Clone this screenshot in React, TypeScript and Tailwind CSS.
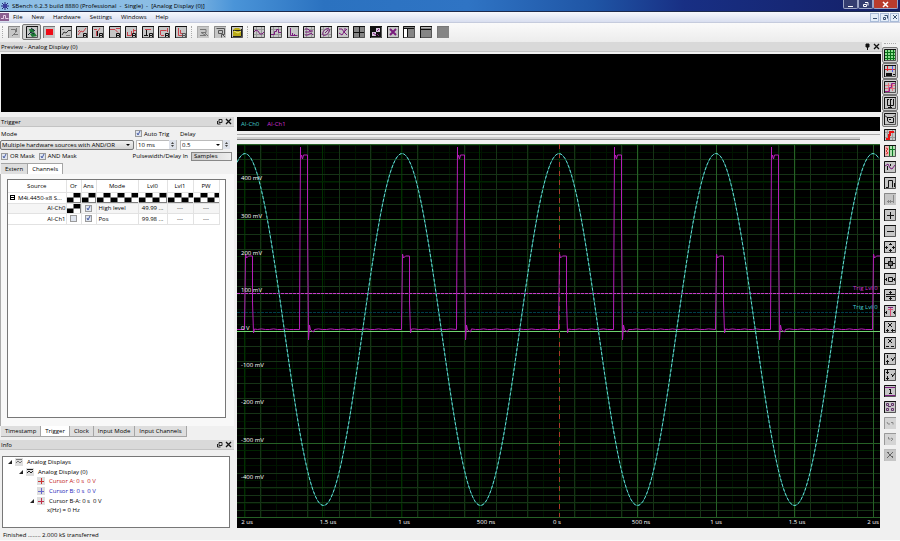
import React from "react";

type Stroke = { d: string; c?: string; w?: number; fill?: boolean };
type IconDef = { label: string; bg?: string; pressed?: boolean; edge?: string; s: Stroke[] };

const K = "#111111";
const G = "#777777";
const R = "#c8434b";
const P = "#7a1d7d";
const RX = "M7.5 11V7.5h3v2H8M9.500 9.500l2 2";

const fileTools: IconDef[] = [
  { label: "Start", edge: "#888", s: [{ d: "M3 3.500h4.500v3L4 10M8.500 2v4M6 8.500h4", c: G }] },
  { label: "Run loop", pressed: true, s: [{ d: "M3 3h5v3H4zM4 8l4-2 3 4-5 1z", c: "#1f7a35", fill: true }, { d: "M2 9l3-3 3 2M5 2l4 3", c: "#123", w: 1 }] },
  { label: "Stop", edge: "#777", s: [{ d: "M3 3h7v6H3z", c: "#ee0b16", fill: true }] },
  { label: "Single", s: [{ d: "M2 9l2-3 2 1 3-3M9 4.500h2", c: "#333" }, { d: "M2 3.500h2M6 9.500h4", c: "#777" }] },
  { label: "Record rising", s: [{ d: "M2 9l3-4 2 1 3-4M2 6l2-2", c: R }, { d: RX, c: K }] },
  { label: "Record pulse", s: [{ d: "M4.500 10V5M2 3.500h3M8 2L6 5", c: R }, { d: RX, c: K }, { d: "M5.500 5v5", c: K }] },
  { label: "Record falling", s: [{ d: "M1 3.500h5l3 3M7 2.500h4", c: R }, { d: RX, c: K }] },
  { label: "Record window", s: [{ d: "M2 9.500h4.500V5M8.500 3v4M2.500 6v3M9 4.500h2", c: R }, { d: RX, c: K }] },
  { label: "Record time", s: [{ d: "M3 3.500h6", c: R }, { d: "M4.500 4v6M2 9.500h4", c: K }, { d: RX, c: K }] },
  { label: "Record gate", s: [{ d: "M2.500 9V4.500h6M9.500 2v4M3 9.500h3", c: R }, { d: RX, c: K }] },
  { label: "Record list", s: [{ d: "M3.500 2v7.500h5M5.500 4v3.500h4", c: R }, { d: RX, c: "#555" }] },
];
const storeTools: IconDef[] = [
  { label: "Export", edge: "#aaa", s: [{ d: "M3 3.500h6v3H4l5 3H3M8 7l3 3", c: G }] },
  { label: "Import", edge: "#888", s: [{ d: "M2.500 2.500h8v6H7.500v3M4.500 4.500h4v3h-4zM9 9l2 2", c: "#555" }] },
  { label: "Open", s: [{ d: "M2 4l2-2h4l2 2v6H2z", c: "#b9aa18", fill: true }, { d: "M2 4.500h8M2 10.500h8.500V3", c: "#222" }, { d: "M3 5l4 2 3-2", c: "#f2ea7c" }] },
];
const gridLines: Stroke = { d: "M1 3.5h10M1 8.5h10M3.5 1v10M8.5 1v10", c: "#9b9b9b" };
const viewTools: IconDef[] = [
  { label: "Analog display", s: [gridLines, { d: "M1 6l2-2 2 1 2 3h2l2-2", c: P }] },
  { label: "Digital display", s: [gridLines, { d: "M1 8.500h3.500V5.500h2V3.500h2v3h3", c: P }] },
  { label: "FFT display", s: [{ d: "M3.500 2v7.500h7M5.500 7v2M7.500 8v1", c: P }] },
  { label: "Histogram", s: [gridLines, { d: "M2 3h3l2 2h3M2 6h4l2-1M2 9h3l3-2 2 2", c: P }] },
  { label: "XY display", s: [gridLines, { d: "M3 9C1 6 7 1 9 3S6 11 3 9zM5 7l3-3", c: P }] },
  { label: "Eye diagram", s: [{ d: "M2 3h3l2 3 3-3M2 7l3 2 2-3 3 3M8 2v3", c: P }] },
  { label: "Tile", bg: "#858585", s: [{ d: "M6.500 1v10M1 6.500h10", c: K }] },
  { label: "Cascade", bg: "#111", s: [{ d: "M6 2h4v4H6zM2 6h4v4H2z", c: "#d8c8df", fill: true }, { d: "M7 5l2-2M3 7l3 2M7 8l2 2", c: P }] },
  { label: "Close display", s: [{ d: "M3 3l6 6M9 3L3 9", c: P, w: 2 }] },
  { label: "Left dock", bg: "#858585", s: [{ d: "M1 3h3v8H1z", c: "#fff", fill: true }, { d: "M1 2.5h10M4.5 3v8", c: K }] },
  { label: "Top dock", bg: "#858585", s: [{ d: "M1 3.5h10", c: K }, { d: "M1 1.500h10", c: "#bbb" }] },
  { label: "Clear layout", bg: "#858585", edge: "#777", s: [] },
];
const sideTools: IconDef[] = [
  { label: "Grid", pressed: true, bg: "#8fdf92", s: [{ d: "M3.5 1v10M6.500 1v10M9.5 1v10M1 3.5h10M1 6.500h10M1 9.5h10", c: "#067016" }] },
  { label: "Cursors", pressed: true, s: [{ d: "M1 4.5h10M3.5 1v5", c: "#e0202c" }, { d: "M8.5 1v6", c: "#5560ee" }, { d: "M2 8h6v3H2zM9 9h2v1H9z", c: K, fill: true }] },
  { label: "Interpolation", pressed: true, s: [{ d: "M1 4.500h10M1 7.5h10M4.500 2v8M8.500 2v8", c: "#e2707c" }, { d: "M1 10.500h4.500V6.500h2V2.500h4", c: "#9a1a8a" }] },
  { label: "Trident", pressed: true, s: [{ d: "M3.500 2v6.500h6V2M6.500 2v9M4 2.500h1M7 2.500h1M4 10.500h4", c: K }] },
  { label: "Label", pressed: true, s: [{ d: "M1 2.500l2 2h6l2-2M3.500 4v4l2 1.500h4V5M5 6.500h2", c: K }] },
  { label: "Trigger edge", s: [gridLines, { d: "M2 10h3V6h1V3h4", c: "#e91212", w: 2 }] },
  { label: "Trigger mask", s: [{ d: "M1 1h4v10H1z", c: "#eeb3b3", fill: true }, { d: "M5 1h6v10H5z", c: "#b3dfb3", fill: true }, { d: "M5.5 1v10M8.5 1v10M5 4.5h6", c: "#0a7722" }, { d: "M2 3l2 1-2 2 2 2-2 1", c: "#e03232" }] },
  { label: "Signal", s: [{ d: "M1 5l3-2 2 4 2 1 3-4", c: P }, { d: "M3.500 5v4M6.500 3v2", c: K }] },
  { label: "Gate", s: [{ d: "M2 10.500h2.500V3.500h4v7M10.500 6v4", c: K }] },
  { label: "Measure", edge: "#888", s: [{ d: "M3 8.500h7M4.500 7v3M9.500 2v8M6.500 7v3", c: "#888" }] },
  { label: "Zoom in", s: [{ d: "M6.500 3v7M3 6.500h7", c: K }] },
  { label: "Zoom out", s: [{ d: "M3 6.500h7", c: K }] },
  { label: "Expand", s: [{ d: "M6.500 2v2M6.500 8v3M1 6.500h3M8 6.500h3M2.500 5v3M9.500 5v3M5 3.500h3M5 9.500h3", c: K }] },
  { label: "Fit all", s: [{ d: "M4 4h5v5H4z", c: "#666", fill: true }, { d: "M6.500 1v3M6.500 9v2M1 6.500h3M9 6.500h2M4.500 4.500h4v4h-4z", c: K }] },
  { label: "Fit width", s: [{ d: "M4.500 4.500h4v4h-4zM1 6.500h2M9 6.500h2M2.500 5v3M10.500 5v3", c: K }] },
  { label: "Fit height", s: [{ d: "M2 5.500h9M2 7.500h9M6.500 2v4M6.500 8v3M5 3.500h3M5 9.500h3", c: K }] },
  { label: "Center trigger", s: [{ d: "M6.500 3v8M4 4.500h5", c: "#d84b77" }, { d: "M4 2.500h5", c: P }, { d: "M2.500 6v3M10.500 6v3M1 7.500h2M9 7.500h2", c: K }] },
  { label: "X zoom in", s: [{ d: "M4 2l4 4M8 2L4 6M2 9.500h3M7 9.500h4M3.500 8v3M8.500 8v3", c: K }] },
  { label: "X zoom out", s: [{ d: "M4 2l4 4M8 2L4 6M2 9.500h3M7 9.500h3", c: K }] },
  { label: "Y zoom in", s: [{ d: "M3.500 2v3M3.500 7v4M2 8.500h3M7 5l2 2 2-3M8 8l1-1", c: K }] },
  { label: "Y zoom out", s: [{ d: "M3.500 1v4M3.500 7v4M2 3.500h3M2 9.500h3M7 5l2 2 2-3M8 8l1-1", c: K }] },
  { label: "Amplitude", s: [{ d: "M1 2.500h10M1 10.500h10", c: P }, { d: "M6.500 4v5M5 4.500h2M5 8.500h3", c: K }] },
  { label: "Matrix", s: [{ d: "M2.500 2.500h2v2h-2zM7.500 2.500h2v2h-2zM2.500 7.500h2v2h-2zM7.500 7.500h2v2h-2zM4 5.500h3", c: "#62356a" }] },
  { label: "Undo", edge: "#999", bg: "#d4d4d4", s: [{ d: "M3 5l1 2h2M7 5.500h2v2", c: "#888" }] },
  { label: "Redo", edge: "#999", bg: "#d4d4d4", s: [{ d: "M4.500 4v2h2M7 5l2 1-2 2", c: "#888" }] },
  { label: "Remove", edge: "#bbb", s: [{ d: "M3 3l6 6M9 3L3 9M4.500 3v2M8.500 7v2", c: "#666" }] },
];

function ToolIcon({ def }: { def: IconDef }) {
  const edge = def.edge ?? "#111";
  return (
    <svg viewBox="0 0 12 12" className="size-3 shrink-0" aria-hidden="true">
      <rect width="12" height="12" fill={def.bg ?? "#c6c6c6"} />
      {def.s.map((p, i) => (
        <path key={i} d={p.d} fill={p.fill ? p.c : "none"} stroke={p.fill ? "none" : p.c} strokeWidth={p.w ?? 1} />
      ))}
      <path d="M.5 12V.5H12" fill="none" stroke={edge} />
      {def.edge ? null : <path d="M11.5 1v10.500H1" fill="none" stroke="#555" />}
    </svg>
  );
}

function ToolButton({ def, vertical }: { def: IconDef; vertical?: boolean }) {
  const size = vertical ? "h-4 w-full" : "h-4 flex-1";
  const look = def.pressed ? "border border-[#777] rounded-xs bg-[#d2d2d2]" : "";
  return (
    <button type="button" title={def.label} aria-label={def.label} className={`flex items-center justify-center ${size} ${look}`}>
      <ToolIcon def={def} />
    </button>
  );
}

const Handle = () => <div className="h-3 w-[2px] mx-[2px] shrink-0 border-l border-dotted border-[#aaa]" />;

function DockHeader({ title, pin }: { title: string; pin?: boolean }) {
  return (
    <header className="flex items-center justify-between h-[10px] shrink-0 bg-[#d9d9d9] border-b border-[#c3c3c3] pr-[2px]">
      <h2 className="pl-px">{title}</h2>
      <div className="flex gap-[2px]">
        <button type="button" aria-label={pin ? "Pin" : "Float"}>
          <svg viewBox="0 0 7 7" className="size-[7px]">
            {pin ? <path d="M2 1h3v3H2zM3.500 4v3" fill="#111" stroke="#111" /> : <path d="M3 1.500h3v3H3zM1.500 3v3h3" fill="none" stroke="#222" />}
          </svg>
        </button>
        <button type="button" aria-label="Close">
          <svg viewBox="0 0 7 7" className="size-[7px]"><path d="M1 1l5 5M6 1L1 6" stroke="#111" strokeWidth="1.300" /></svg>
        </button>
      </div>
    </header>
  );
}

function Tick({ label, checked = true }: { label?: string; checked?: boolean }) {
  return (
    <label className="flex items-center gap-[2px] whitespace-nowrap">
      <span className="grid size-[7px] shrink-0">
        <input type="checkbox" defaultChecked={checked} aria-label={label ?? "Enable"} className="peer col-start-1 row-start-1 size-[7px] appearance-none border border-[#9a9a9a] bg-[#dfe5ef]" />
        <svg viewBox="0 0 7 7" className="pointer-events-none invisible col-start-1 row-start-1 size-[7px] peer-checked:visible"><path d="M2 3l1 2 2-4" fill="none" stroke="#4a5ea6" /></svg>
      </span>
      {label}
    </label>
  );
}

function Tabs({ items, active, below }: { items: string[]; active: string; below?: boolean }) {
  return (
    <div role="tablist" className="flex h-[11px] shrink-0 pl-px">
      {items.map((t) => (
        <button
          key={t}
          type="button"
          role="tab"
          aria-selected={t === active}
          className={`px-1 border-r border-[#a5a5a5] ${below ? "border-b" : "border-t"} ${t === active ? "bg-white" : "bg-[#dedede]"}`}
        >
          {t}
        </button>
      ))}
    </div>
  );
}

const CHECKER = "bg-[conic-gradient(#000_25%,#fff_0_50%,#000_0_75%,#fff_0)] bg-[length:14px_10px]";

function TriggerTable() {
  const cell = "border-r border-b border-[#e2e2e2] p-0";
  return (
    <table className="w-[211px] table-fixed border-collapse text-center">
      <colgroup>
        <col className="w-[58px]" /><col className="w-[15px]" /><col className="w-[15px]" /><col className="w-[42px]" />
        <col className="w-[29px]" /><col className="w-[26px]" /><col className="w-[26px]" />
      </colgroup>
      <thead>
        <tr className="h-3">
          {["Source", "Or", "Ans", "Mode", "Lvl0", "Lvl1", "PW"].map((h) => (
            <th key={h} scope="col" className={`font-normal ${cell}`}>{h}</th>
          ))}
        </tr>
      </thead>
      <tbody>
        <tr className="h-[11px]">
          <td className={cell}>
            <div className="flex items-center gap-[3px] pl-[2px] whitespace-nowrap">
              <button type="button" aria-label="Collapse" className="size-[5px] shrink-0 border border-black bg-[linear-gradient(#000,#000)] bg-[length:3px_1px] bg-center bg-no-repeat" />
              M4i.4450-x8 S...
            </div>
          </td>
          {[0, 1, 2, 3, 4, 5].map((i) => <td key={i} className={`${cell} ${CHECKER}`} />)}
        </tr>
        <tr className="h-[10px] bg-[#f5f5f5]">
          <td className={`${cell} text-right`}>AI-Ch0</td>
          <td className={`${cell} ${CHECKER}`} />
          <td className={cell}><div className="flex justify-center"><Tick /></div></td>
          <td className={`${cell} text-left pl-[2px]`}>High level</td>
          <td className={cell}>49.99 ...</td><td className={cell}>---</td><td className={cell}>---</td>
        </tr>
        <tr className="h-[11px]">
          <td className={`${cell} text-right`}>AI-Ch1</td>
          <td className={cell}><div className="flex justify-center"><Tick checked={false} /></div></td>
          <td className={cell}><div className="flex justify-center"><Tick /></div></td>
          <td className={`${cell} text-left pl-[2px]`}>Pos</td>
          <td className={cell}>99.98 ...</td><td className={cell}>---</td><td className={cell}>---</td>
        </tr>
      </tbody>
    </table>
  );
}

function Spin() {
  return (
    <svg viewBox="0 0 7 9" className="h-[9px] w-[7px] shrink-0" aria-hidden="true">
      <rect width="7" height="9" fill="#dde1ea" /><path d="M2 4l1.500-2L5 4zM2 5l1.500 2L5 5z" fill="#444" />
    </svg>
  );
}

function TriggerDock() {
  const field = "h-[10px] border border-[#bbb] bg-white";
  return (
    <section className="flex flex-1 flex-col min-h-0">
      <DockHeader title="Trigger" />
      <div className="flex h-3 items-center pl-px pt-px">
        <label htmlFor="mode" className="w-[134px]">Mode</label>
        <div className="w-[45px]"><Tick label="Auto Trig" /></div>
        <label htmlFor="delay">Delay</label>
      </div>
      <div className="flex h-[11px] items-center">
        <div className="grid w-[134px]">
          <select id="mode" className="col-start-1 row-start-1 h-[10px] w-full appearance-none rounded-xs border border-[#777] bg-linear-to-b from-[#f0f0f0] to-[#d2d2d2] pl-px leading-[8px]">
            <option>Multiple hardware sources with AND/OR</option>
          </select>
          <span className="pointer-events-none col-start-1 row-start-1 mr-1 self-center justify-self-end border-x-2 border-t-2 border-x-transparent border-t-black" />
        </div>
        <div className={`ml-[2px] flex w-[41px] items-center ${field}`}>
          <input aria-label="Auto trigger time" defaultValue="10 ms" className="min-w-0 flex-1 pl-px leading-[8px]" /><Spin />
        </div>
        <div className={`ml-[3px] flex w-[43px] items-center pr-[2px] ${field}`}>
          <input id="delay" defaultValue="0.5" className="min-w-0 flex-1 pl-px leading-[8px]" />
          <span className="border-x-2 border-t-2 border-x-transparent border-t-black" />
        </div>
        <Spin />
      </div>
      <div className="flex h-3 items-center gap-1 pl-px">
        <Tick label="OR Mask" />
        <Tick label="AND Mask" />
        <label htmlFor="unit" className="ml-auto -mr-[2px]">Pulsewidth/Delay In</label>
        <select id="unit" className="mr-[2px] ml-px h-[9px] w-[41px] appearance-none border border-[#888] bg-linear-to-r from-[#ccc] to-[#eee] pl-[2px] leading-[7px]">
          <option>Samples</option>
        </select>
      </div>
      <div className="h-px shrink-0" />
      <Tabs items={["Extern", "Channels"]} active="Channels" />
      <div className="min-h-0 flex-1 border-l border-[#aaa] bg-[#f8f8f8] pt-[5px] pb-2 pl-[6px] pr-2">
        <div className="h-full border border-[#777] bg-white"><TriggerTable /></div>
      </div>
      <Tabs items={["Timestamp", "Trigger", "Clock", "Input Mode", "Input Channels"]} active="Trigger" below />
    </section>
  );
}

const tree = [
  { pad: "pl-1", open: true, icon: "#777", text: "Analog Displays", tone: "" },
  { pad: "pl-[15px]", open: true, icon: "#222", text: "Analog Display (0)", tone: "" },
  { pad: "pl-[26px]", open: false, icon: "#c33", text: "Cursor A: 0 s  0 V", tone: "text-[#c22020]" },
  { pad: "pl-[26px]", open: false, icon: "#66c", text: "Cursor B: 0 s  0 V", tone: "text-[#2020b8]" },
  { pad: "pl-[26px]", open: true, icon: "#c0304a", text: "Cursor B-A: 0 s  0 V", tone: "" },
  { pad: "pl-[36px]", open: false, icon: "", text: "x(Hz) = 0 Hz", tone: "" },
];

function InfoDock() {
  return (
    <section className="flex h-[88px] shrink-0 flex-col">
      <DockHeader title="Info" />
      <ul className="mt-[6px] ml-[2px] mr-1 flex h-[72px] flex-col border border-[#777] bg-white pb-3">
        {tree.map((n, i) => (
          <li key={n.text} className={`flex min-h-0 flex-1 items-center whitespace-pre ${n.pad} ${n.tone}`}>
            <svg viewBox="0 0 6 6" className="mr-[2px] size-[6px]">{n.open && <path d="M1 5h4V1z" fill="#222" />}</svg>
            {n.icon && (
              <svg viewBox="0 0 8 8" className="mr-1 size-2">
                <rect width="8" height="8" fill="#dedede" />
                <path d={i < 2 ? "M1 5l2-2 2 2 2-2M1 1.500h6" : "M1 4.500h6M4.500 1v6"} fill="none" stroke={n.icon} />
              </svg>
            )}
            {n.text}
          </li>
        ))}
      </ul>
    </section>
  );
}

const PLOT_W = 643;
const PLOT_H = 384;
const ZERO_X = 322;
const ZERO_Y = 187;
const US = 157;

function sinePath() {
  let d = "";
  for (let x = 0; x <= PLOT_W; x += 2) {
    const y = 185.5 - 176 * Math.cos(((x - ZERO_X) / US) * 2 * Math.PI);
    d += `${x ? "L" : "M"}${x} ${y.toFixed(1)}`;
  }
  return d;
}

function pulsePath() {
  let d = "M0 185.5";
  for (let k = -2; k <= 2; k++) {
    const a = ZERO_X + k * US + 0.5;
    d += `L${a - 1} 185.5L${a} 110l1 4l2-2h4v46l1 31l1-4`;
    if (k === 2) break;
    for (let x = a + 12; x < a + 52; x += 4) d += `L${x} ${185.5 - (Math.floor(x) % 3 === 0 ? 0.6 : 0)}`;
    const b = a + 55;
    d += `L${b - 1} 185.5L${b} 3v12l1-4l1 4l1-4h4v64l1 121l1-15l1 5l3 2`;
    for (let x = b + 14; x < b + 98; x += 4) d += `L${x} ${185.5 - (Math.floor(x) % 3 === 0 ? 0.6 : 0)}`;
  }
  return d;
}

const SINE = sinePath();
const PULSE = pulsePath();
const MID_Y = [15, 30, 45, 60, 90, 105, 127, 142, 157, 172, 202, 217, 239, 254, 269, 284, 314, 329, 343, 351, 358, 366];
const MID_X = [23, 70, 102, 133, 180, 227, 259, 290, 337, 384, 416, 463, 510, 541, 573, 620];
const BRIGHT_X = [400, 479, 557, 636];
const yLabels: [string, number][] = [["400 mV", 34], ["300 mV", 72], ["200 mV", 109], ["100 mV", 146], ["0 V", 184], ["-100 mV", 221], ["-200 mV", 258], ["-300 mV", 296], ["-400 mV", 333]];
const xLabels: [string, number][] = [["2 us", 10], ["1.5 us", 91], ["1 us", 167], ["500 ns", 249], ["0 s", 320], ["500 ns", 404], ["1 us", 479], ["1.5 us", 560], ["2 us", 636]];

function Plot() {
  const fine = Array.from({ length: 51 }, (_, i) => ZERO_Y + (i - 25) * 7.46).filter((y) => y > 0 && y < 373);
  const cols = Array.from({ length: 41 }, (_, i) => ZERO_X + (i - 20) * 15.7);
  const px = (v: number) => `${(v / PLOT_W) * 100}%`;
  const py = (v: number) => `${(v / PLOT_H) * 100}%`;
  return (
    <svg className="min-h-0 w-full flex-1 bg-black" role="img" aria-label="Analog waveform display">
      <svg viewBox={`0 0 ${PLOT_W} ${PLOT_H}`} width="100%" height="100%" preserveAspectRatio="none" fill="none">
        {fine.map((y) => <path key={y} d={`M0 ${Math.round(y) + 0.5}H643`} stroke="#001400" />)}
        {cols.map((x) => <path key={x} d={`M${Math.round(x) + 0.5} 0V373`} stroke="#001400" />)}
        {[8, 86, 165, 243].map((x) => <path key={x} d={`M${x - 0.5} 0V373`} stroke="#003000" />)}
        {[37, 112, 224, 306].map((y) => <path key={y} d={`M0 ${y + 0.5}H643`} stroke="#002400" />)}
        {MID_Y.map((y) => <path key={y} d={`M0 ${y + 0.5}H643`} stroke="#163316" />)}
        {MID_X.map((x) => <path key={x} d={`M${x + 0.5} 0V373`} stroke="#163316" />)}
        {BRIGHT_X.map((x) => <path key={x} d={`M${x + 0.5} 0V373`} stroke="#266026" />)}
        {[0, 75, 299, 373].map((y) => <path key={y} d={`M0 ${y + 0.5}H643`} stroke="#266026" />)}
        <path d="M0 187.500H643" stroke="#6fd46f" />
        <path d="M0 168.500H643" stroke="#003c48" strokeDasharray="3 1" />
        <path d="M0 149.500H643" stroke="#4a124c" />
        <path d="M0 149.500H643" stroke="#c53fca" strokeDasharray="3 1" />
        <path d="M322.500 0V373" stroke="#003a00" />
        <path d="M322.500 0V373" stroke="#a83a2a" strokeDasharray="5 4" />
        <path d={PULSE} stroke="#b51db8" />
        <path d={SINE} stroke="#1c746c" />
        <path d={SINE} stroke="#62d8cd" strokeDasharray="3 2" />
      </svg>
      <g fill="#fff" className="text-[6px]">
        {yLabels.map(([t, y]) => <text key={t} x={px(4)} y={py(y + 2)}>{t}</text>)}
        {xLabels.map(([t, x], i) => <text key={i} x={px(x)} y={py(380)} textAnchor="middle">{t}</text>)}
      </g>
      <g className="text-[6px]">
        <text x={px(616)} y={py(146)} fill="#d02fd4">Trig Lvl 0</text>
        <text x={px(616)} y={py(165)} fill="#45cfd0">Trig Lvl 0</text>
      </g>
    </svg>
  );
}

function WindowControls() {
  const b = "flex h-[9px] items-center justify-center rounded-b-xs border border-t-0 border-[#9aa3c4]";
  return (
    <div className="flex self-start pr-[2px] text-white">
      <button type="button" aria-label="Minimize" className={`w-[15px] bg-[#343d70] ${b}`}><span className="mt-1 h-px w-[5px] bg-white" /></button>
      <button type="button" aria-label="Restore" className={`w-[15px] bg-[#343d70] ${b}`}>
        <svg viewBox="0 0 7 7" className="size-[7px]"><path d="M3 1.500h3v3M1.500 3.500h3v2h-3z" fill="none" stroke="#fff" /></svg>
      </button>
      <button type="button" aria-label="Close" className={`w-[25px] bg-[#b93c2c] ${b}`}>
        <svg viewBox="0 0 7 7" className="size-[7px]"><path d="M1 1l5 5M6 1L1 6" stroke="#fff" strokeWidth="1.500" /></svg>
      </button>
    </div>
  );
}

export default function App() {
  return (
    <div className="flex h-screen flex-col overflow-hidden bg-[#f0f0f0] font-['Open_Sans','Noto_Sans',sans-serif] text-[6px] leading-[8px] text-black">
      <header className="flex h-3 shrink-0 items-center justify-between border-b border-[#1c2a4c] bg-[linear-gradient(90deg,#8fc0e6_0%,#8abce4_20%,#4a94d8_26%,#2b72c0_36%,#2f74c4_52%,#1f55a5_66%,#182f84_76%,#141f66_100%)]">
        <div className="flex items-center gap-[3px] pl-px whitespace-pre">
          <svg viewBox="0 0 8 8" className="size-2"><path d="M4 0v8M0 4h8M1 1l6 6M7 1L1 7" stroke="#26267d" /><circle cx="4" cy="4" r="2" fill="#3b3b9e" /></svg>
          <h1>{"SBench 6.2.3 build 8880 (Professional  -  Single)  -  [Analog Display (0)]"}</h1>
        </div>
        <WindowControls />
      </header>

      <nav className="flex h-[11px] shrink-0 items-center justify-between border-b border-[#c5cbdd] bg-linear-to-b from-[#f6f8fd] to-[#d8deef]">
        <div className="flex items-center gap-[9px]">
          <svg viewBox="0 0 9 8" className="-mr-[5px] h-2 w-[9px]"><rect width="9" height="8" fill="#8b5f90" /><path d="M1 5.500h2.500V2.500h2v3h3" fill="none" stroke="#e4cde6" /></svg>
          {["File", "New", "Hardware", "Settings", "Windows", "Help"].map((m) => <button key={m} type="button">{m}</button>)}
        </div>
        <div className="flex gap-px pr-px">
          {["M1 4.500h4", "M2.500 1.500h3v3M1.500 3.500h2v2h-2z", "M1 1l4 4M5 1L1 5"].map((d, i) => (
            <button key={d} type="button" aria-label={["Minimize display", "Restore display", "Close display"][i]} className="flex h-[9px] w-[9px] items-center justify-center border border-[#a9bcd8] bg-[#e4edf8]">
              <svg viewBox="0 0 6 6" className="size-[6px]"><path d={d} fill="none" stroke="#3c5373" /></svg>
            </button>
          ))}
        </div>
      </nav>

      <div role="toolbar" aria-label="Main" className="flex h-[19px] shrink-0 items-center bg-linear-to-b from-[#fafafa] to-[#ececec] pb-px">
        <Handle />
        <div className="flex w-[183px]">{fileTools.map((d) => <ToolButton key={d.label} def={d} />)}</div>
        <Handle />
        <div className="flex w-[50px]">{storeTools.map((d) => <ToolButton key={d.label} def={d} />)}</div>
        <Handle />
        <div className="flex w-[200px]">{viewTools.map((d) => <ToolButton key={d.label} def={d} />)}</div>
      </div>

      <div className="flex min-h-0 flex-1">
        <main className="flex min-w-0 flex-1 flex-col">
          <DockHeader title="Preview - Analog Display (0)" pin />
          <div className="mx-px mt-[2px] h-[58px] shrink-0 bg-black" />
          <div className="mt-[5px] flex min-h-0 flex-1">
            <aside className="flex w-[234px] shrink-0 flex-col gap-[3px]">
              <TriggerDock />
              <InfoDock />
            </aside>
            <div className="ml-[3px] mr-[2px] flex min-w-0 flex-1 flex-col">
              <div className="flex h-[14px] shrink-0 items-center gap-2 bg-black pl-1">
                <span className="text-[#45cfd0]">AI-Ch0</span>
                <span className="text-[#d02fd4]">AI-Ch1</span>
              </div>
              <div className="h-[13px] shrink-0 pt-[3px]">
                <div className="h-px bg-[#aaa]" />
                <div className="mt-[2px] mr-5 h-[3px] border-b border-[#888] bg-[#cfcfcf]" />
              </div>
              <Plot />
            </div>
          </div>
        </main>
        <div role="toolbar" aria-label="Display tools" className="flex w-[18px] shrink-0 flex-col pr-[2px]">
          <div className="mx-[2px] mt-px mb-[3px] h-px border-t border-dotted border-[#aaa]" />
          {sideTools.map((d) => <ToolButton key={d.label} def={d} vertical />)}
        </div>
      </div>

      <footer className="h-[13px] shrink-0 border-b border-[#fafafa] pl-[3px] pt-[3px]">Finished ........ 2.000 kS transferred</footer>
    </div>
  );
}
